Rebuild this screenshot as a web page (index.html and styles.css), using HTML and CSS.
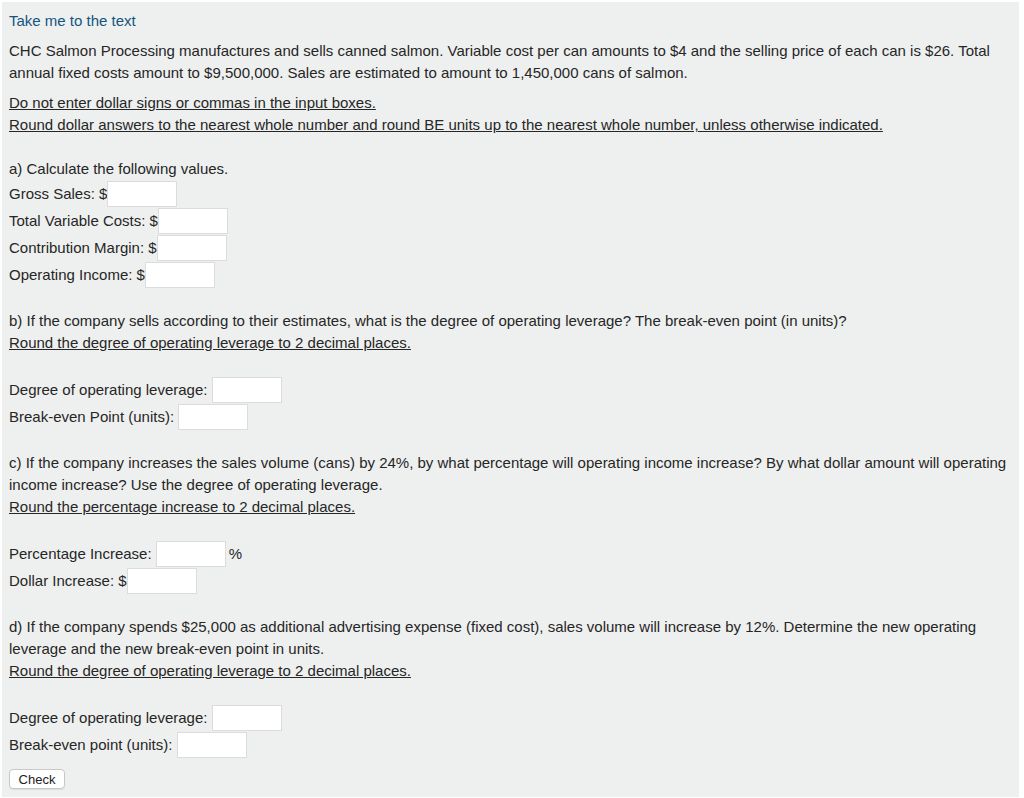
FILE: index.html
```html
<!DOCTYPE html>
<html>
<head>
<meta charset="utf-8">
<link rel="stylesheet" href="styles.css">
</head>
<body>
<div class="panel">
  <div class="line"><a class="link" href="#">Take me to the text</a></div>
  <p class="para">CHC Salmon Processing manufactures and sells canned salmon. Variable cost per can amounts to $4 and the selling price of each can is $26. Total annual fixed costs amount to $9,500,000. Sales are estimated to amount to 1,450,000 cans of salmon.</p>
  <p class="para u">Do not enter dollar signs or commas in the input boxes.<br>Round dollar answers to the nearest whole number and round BE units up to the nearest whole number, unless otherwise indicated.</p>
  <div class="blank"></div>
  <div class="line">a) Calculate the following values.</div>
  <div class="row">Gross Sales: $<input class="box"></div>
  <div class="row">Total Variable Costs: $<input class="box"></div>
  <div class="row">Contribution Margin: $<input class="box"></div>
  <div class="row">Operating Income: $<input class="box"></div>
  <div class="blank"></div>
  <div class="line">b) If the company sells according to their estimates, what is the degree of operating leverage? The break-even point (in units)?</div>
  <div class="line u">Round the degree of operating leverage to 2 decimal places.</div>
  <div class="blank"></div>
  <div class="row">Degree of operating leverage: <input class="box"></div>
  <div class="row">Break-even Point (units): <input class="box"></div>
  <div class="blank"></div>
  <div class="line">c) If the company increases the sales volume (cans) by 24%, by what percentage will operating income increase? By what dollar amount will operating income increase? Use the degree of operating leverage.</div>
  <div class="line u">Round the percentage increase to 2 decimal places.</div>
  <div class="blank"></div>
  <div class="row">Percentage Increase: <input class="box"><span class="pct">%</span></div>
  <div class="row">Dollar Increase: $<input class="box"></div>
  <div class="blank"></div>
  <div class="line">d) If the company spends $25,000 as additional advertising expense (fixed cost), sales volume will increase by 12%. Determine the new operating leverage and the new break-even point in units.</div>
  <div class="line u">Round the degree of operating leverage to 2 decimal places.</div>
  <div class="blank"></div>
  <div class="row">Degree of operating leverage: <input class="box"></div>
  <div class="row">Break-even point (units): <input class="box"></div>
  <div class="actions"><button class="check">Check</button></div>
</div>
</body>
</html>
```

FILE: styles.css
```css
html, body {
  margin: 0;
  padding: 0;
  background: #ffffff;
}
body {
  font-family: "Liberation Sans", Arial, Helvetica, sans-serif;
  font-size: 15px;
  color: #262626;
}
.panel {
  margin: 2px 5px 1px 2px;
  height: 780px;
  background: #eef0ef;
  padding: 8px 7px 7px 7px;
}
.line {
  line-height: 22px;
}
.link {
  color: #14557f;
  text-decoration: none;
}
.para {
  margin: 8px 0 0 0;
  line-height: 22px;
}
.u {
  text-decoration: underline;
}
.blank {
  height: 22px;
}
.row {
  height: 27px;
  line-height: 27px;
  display: flex;
  align-items: center;
  white-space: pre;
}
.box {
  width: 70px;
  height: 26px;
  box-sizing: border-box;
  border: 1px solid #dcdcdc;
  background: #fff;
  margin: 0;
  padding: 0;
  font: inherit;
}
.pct {
  margin-left: 3px;
}
.actions {
  padding-top: 11px;
}
.check {
  width: 56px;
  height: 20px;
  box-sizing: border-box;
  border: 1px solid #c8c8c8;
  border-radius: 4px;
  background: #fff;
  font-family: "Liberation Sans", Arial, sans-serif;
  font-size: 13px;
  color: #222;
  padding: 0;
  box-shadow: 0 1px 1px rgba(0,0,0,0.08);
}
```
